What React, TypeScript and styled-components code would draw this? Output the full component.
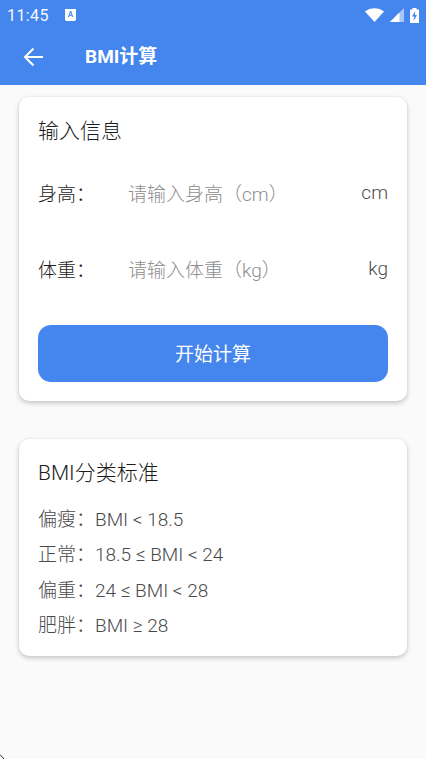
import React from "react";
import styled, { createGlobalStyle } from "styled-components";

const Global = createGlobalStyle`
  html, body { margin: 0; padding: 0; }
  body { background: #fafafa; font-family: Roboto, "Noto Sans CJK SC", sans-serif; }
  * { box-sizing: border-box; }
`;
const Page = styled.div`
  position: relative; width: 426px; height: 759px; overflow: hidden; background: #fafafa;
`;
const Header = styled.header`
  height: 85px; background: #4486ee; color: #fff; display: flex; flex-direction: column;
`;
const StatusBar = styled.div`
  height: 28px; display: flex; align-items: center; padding: 2px 7px 0 7px;
`;
const Time = styled.span`
  font-size: 16px; letter-spacing: 0.4px; width: 58px; opacity: .95;
`;
const StatusRight = styled.div`
  margin-left: auto; display: flex; align-items: center; gap: 6px;
`;
const AppBar = styled.div`
  height: 57px; display: flex; align-items: center; padding-left: 23px;
`;
const Back = styled.svg`
  width: 21px; height: 22px; margin-right: 41px; display: block;
`;
const Title = styled.h1`
  margin: 0; font-size: 19px; font-weight: 700; line-height: 1;
`;
const Main = styled.main`
  padding: 12px 19px 0; display: flex; flex-direction: column; gap: 38px;
`;
const Card = styled.section<{ $h: number }>`
  height: ${p => p.$h}px; background: #fff; border-radius: 10px;
  box-shadow: 0 2px 5px rgba(0,0,0,.22), 0 0 2px rgba(0,0,0,.05);
  padding: 20px 19px 0;
`;
const CardTitle = styled.h2`
  margin: 0; font-size: 21px; font-weight: 300; line-height: 28px; color: #1c1c1c;
`;
const Field = styled.div<{ $mt: number }>`
  display: flex; align-items: center; height: 28px; margin-top: ${p => p.$mt}px;
`;
const Label = styled.span`
  width: 90px; font-size: 19px; font-weight: 300; color: #1c1c1c;
`;
const Hint = styled.span`
  flex: 1; font-size: 19px; font-weight: 300; color: #8e8e8e;
`;
const Unit = styled.span`
  font-size: 19px; font-weight: 300; color: #4a4a4a;
`;
const Button = styled.button`
  display: block; width: 100%; height: 57px; margin-top: 43px; padding: 0 0 2px; border: 0; border-radius: 13px;
  background: #4486ee; color: #fff; font: 400 19px Roboto, "Noto Sans CJK SC", sans-serif;
`;
const Rows = styled.div`
  margin-top: 20px; display: flex; flex-direction: column; gap: 10.33px;
`;
const Row = styled.div`
  font-size: 19px; font-weight: 300; line-height: 25px; color: #4a4a4a;
`;
const Corner = styled.svg`
  position: absolute; left: 0; bottom: 0; width: 5px; height: 5px;
`;

export default function App() {
  return (
    <Page>
      <Global />
      <Header>
        <StatusBar>
          <Time>11:45</Time>
          <svg width="11" height="12" viewBox="0 0 11 12">
            <path fill="#fff" d="M0 0h11v10.500l-1 1.500H1l-1-1.500z" />
            <path fill="#4486ee" d="M5 2h1.200l2 6H7l-.4-1.300H4.500L4.100 8H3zM4.900 5.700h1.400L5.600 3.500z" />
          </svg>
          <StatusRight>
            <svg width="19" height="14" viewBox="0 0 19 14">
              <path fill="#fff" d="M0 3.500C5 -1 14 -1 19 3.500L9.500 14z" />
            </svg>
            <svg width="14" height="14" viewBox="0 0 14 14">
              <path fill="#a9c6f7" d="M14 0v14H0z" />
              <path fill="#fff" d="M9.500 4.500V14H0z" />
            </svg>
            <svg width="9" height="15" viewBox="0 0 9 15">
              <path fill="#fff" d="M2.500 0h4v1.500H9V15H0V1.500h2.500z" />
              <path fill="#4486ee" d="M5.300 3 2 8.500h2.200L3.600 13 7 7H4.800z" />
            </svg>
          </StatusRight>
        </StatusBar>
        <AppBar>
          <Back viewBox="0 0 21 22" fill="none" stroke="#fff" strokeWidth="2">
            <path d="M20 11H2M10.500 2.500 2 11l8.500 8.500" />
          </Back>
          <Title>BMI计算</Title>
        </AppBar>
      </Header>
      <Main>
        <Card $h={304}>
          <CardTitle>输入信息</CardTitle>
          <Field $mt={33}>
            <Label>身高：</Label>
            <Hint>请输入身高（cm）</Hint>
            <Unit>cm</Unit>
          </Field>
          <Field $mt={48}>
            <Label>体重：</Label>
            <Hint>请输入体重（kg）</Hint>
            <Unit>kg</Unit>
          </Field>
          <Button>开始计算</Button>
        </Card>
        <Card $h={217}>
          <CardTitle>BMI分类标准</CardTitle>
          <Rows>
            <Row>偏瘦：BMI &lt; 18.5</Row>
            <Row>正常：18.5 ≤ BMI &lt; 24</Row>
            <Row>偏重：24 ≤ BMI &lt; 28</Row>
            <Row>肥胖：BMI ≥ 28</Row>
          </Rows>
        </Card>
      </Main>
      <Corner viewBox="0 0 5 5"><path d="M0 .5 4 5" fill="none" stroke="#333" strokeWidth="1" /></Corner>
    </Page>
  );
}
